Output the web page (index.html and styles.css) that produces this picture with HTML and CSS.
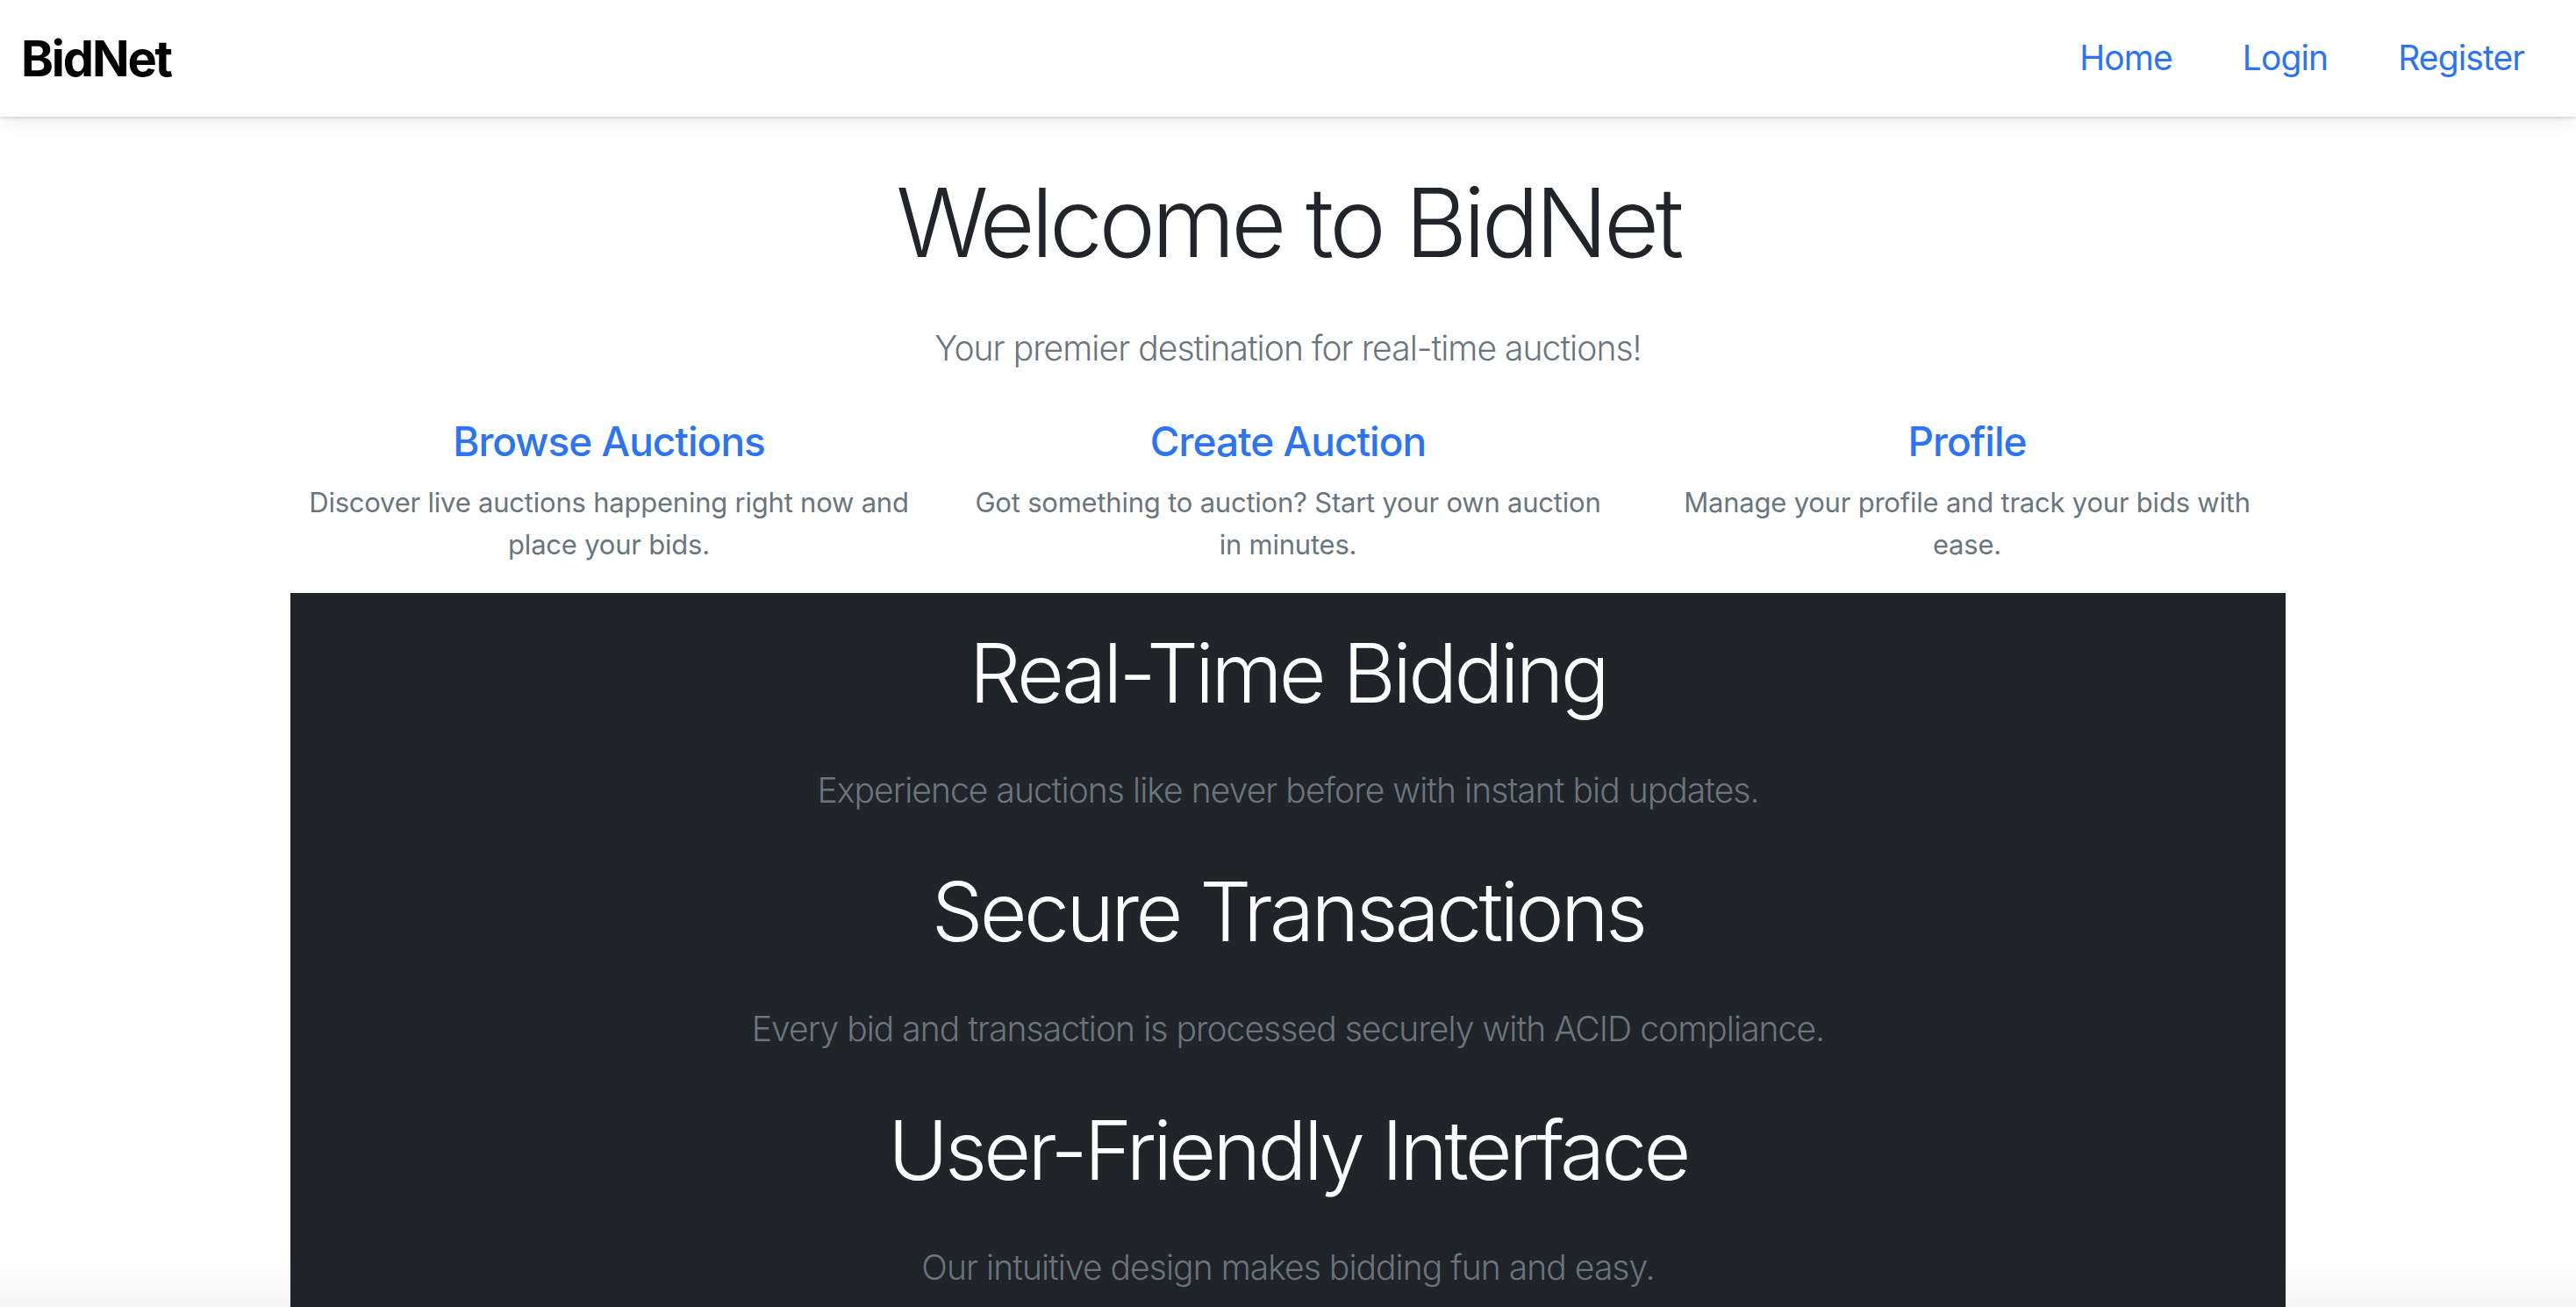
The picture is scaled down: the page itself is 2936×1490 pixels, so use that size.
FILE: index.html
```html
<!DOCTYPE html>
<html lang="en">
<head>
<meta charset="utf-8">
<title>BidNet</title>
<link rel="stylesheet" href="styles.css">
</head>
<body>
<nav class="navbar">
  <a class="brand" href="#">BidNet</a>
  <ul class="nav-links">
    <li><a href="#">Home</a></li>
    <li><a href="#">Login</a></li>
    <li><a href="#">Register</a></li>
  </ul>
</nav>
<main class="container">
  <h1 class="display-title">Welcome to BidNet</h1>
  <p class="lead muted intro">Your premier destination for real-time auctions!</p>
  <div class="features">
    <div class="feature">
      <h4><a href="#">Browse Auctions</a></h4>
      <p>Discover live auctions happening right now and place your bids.</p>
    </div>
    <div class="feature">
      <h4><a href="#">Create Auction</a></h4>
      <p>Got something to auction? Start your own auction in minutes.</p>
    </div>
    <div class="feature">
      <h4><a href="#">Profile</a></h4>
      <p>Manage your profile and track your bids with ease.</p>
    </div>
  </div>
  <section class="highlights">
    <div class="highlight">
      <h2>Real-Time Bidding</h2>
      <p class="lead muted">Experience auctions like never before with instant bid updates.</p>
    </div>
    <div class="highlight">
      <h2>Secure Transactions</h2>
      <p class="lead muted">Every bid and transaction is processed securely with ACID compliance.</p>
    </div>
    <div class="highlight">
      <h2>User-Friendly Interface</h2>
      <p class="lead muted">Our intuitive design makes bidding fun and easy.</p>
    </div>
  </section>
</main>
<div class="window-shade"></div>
</body>
</html>
```

FILE: styles.css
```css
* { box-sizing: border-box; }
html, body { margin: 0; padding: 0; }
body {
  font-family: Inter, "Noto Sans", sans-serif;
  color: #212529;
  background: #fff;
}
a { text-decoration: none; color: #2c73f6; }

.navbar {
  height: 133px;
  display: flex;
  align-items: center;
  justify-content: space-between;
  padding: 0 19px 0 24px;
  background: #fff;
  box-shadow: 0 2px 3px rgba(0, 0, 0, 0.12), 0 8px 22px rgba(0, 0, 0, 0.06);
  position: relative;
  z-index: 2;
}
.brand {
  font-size: 56px;
  font-weight: 700;
  color: #000;
  line-height: 1;
  letter-spacing: -2.2px;
}
.nav-links { display: flex; list-style: none; margin: 0; padding: 0; }
.nav-links a {
  display: block;
  padding: 0 40px;
  font-size: 39px;
  line-height: 1.5;
  letter-spacing: -0.9px;
}

.container { width: 2274px; margin: 0 auto; text-align: center; }

.display-title {
  margin: 55px 0 0;
  font-size: 109px;
  line-height: 131px;
  font-weight: 300;
  letter-spacing: -4.5px;
}
.lead {
  font-size: 39px;
  line-height: 58px;
  font-weight: 300;
  letter-spacing: -0.95px;
}
.muted { color: #6c757d; }
.intro { margin: 49px 0 0; }

.features {
  display: grid;
  grid-template-columns: repeat(3, 1fr);
  margin: 50px -24px 0;
}
.feature { padding: 0 24px; }
.feature h4 {
  margin: 0;
  font-size: 46px;
  line-height: 55px;
  font-weight: 500;
  letter-spacing: -1px;
}
.feature p {
  margin: 18px 0 0;
  font-size: 31px;
  line-height: 48px;
  color: #6c757d;
  letter-spacing: -0.22px;
}

.highlights {
  margin-top: 31px;
  background: #212529;
  color: #fff;
  padding: 35px 0 120px;
}
.highlight + .highlight { margin-top: 53px; }
.highlight h2 {
  margin: 0;
  font-size: 93px;
  line-height: 112px;
  font-weight: 300;
  letter-spacing: -3.7px;
}
.highlight .lead { margin: 49px 0 0; }

.window-shade {
  position: fixed;
  left: 0;
  right: 0;
  bottom: 0;
  height: 60px;
  pointer-events: none;
  background: linear-gradient(rgba(0, 0, 0, 0), rgba(0, 0, 0, 0.035));
  z-index: 5;
}
```
